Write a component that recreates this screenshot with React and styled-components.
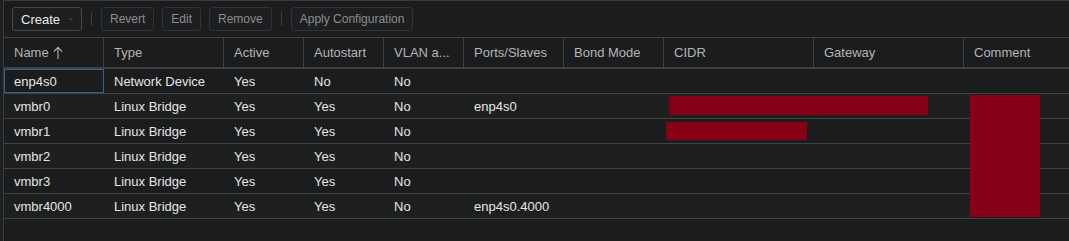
import React from 'react';
import styled, { createGlobalStyle } from 'styled-components';

const GlobalStyle = createGlobalStyle`
  html, body {
    margin: 0;
    padding: 0;
    background: #1b1c1e;
  }
  body {
    font-family: "Liberation Sans", Arial, sans-serif;
    font-size: 13px;
    color: #e4e4e4;
  }
`;

const columns = [
  { key: 'name', title: 'Name', width: 100 },
  { key: 'type', title: 'Type', width: 120 },
  { key: 'active', title: 'Active', width: 80 },
  { key: 'autostart', title: 'Autostart', width: 80 },
  { key: 'vlan', title: 'VLAN a...', width: 80 },
  { key: 'ports', title: 'Ports/Slaves', width: 100 },
  { key: 'bond', title: 'Bond Mode', width: 100 },
  { key: 'cidr', title: 'CIDR', width: 150 },
  { key: 'gateway', title: 'Gateway', width: 150 },
  { key: 'comment', title: 'Comment', width: null },
];

const rows = [
  { name: 'enp4s0', type: 'Network Device', active: 'Yes', autostart: 'No', vlan: 'No', ports: '' },
  { name: 'vmbr0', type: 'Linux Bridge', active: 'Yes', autostart: 'Yes', vlan: 'No', ports: 'enp4s0' },
  { name: 'vmbr1', type: 'Linux Bridge', active: 'Yes', autostart: 'Yes', vlan: 'No', ports: '' },
  { name: 'vmbr2', type: 'Linux Bridge', active: 'Yes', autostart: 'Yes', vlan: 'No', ports: '' },
  { name: 'vmbr3', type: 'Linux Bridge', active: 'Yes', autostart: 'Yes', vlan: 'No', ports: '' },
  { name: 'vmbr4000', type: 'Linux Bridge', active: 'Yes', autostart: 'Yes', vlan: 'No', ports: 'enp4s0.4000' },
];

const Page = styled.div`
  display: flex;
  height: 241px;
  background: #1b1c1e;
  overflow: hidden;
`;

const Gutter = styled.div`
  width: 3px;
  flex: none;
  background: #1f2022;
  border-right: 1px solid #3a3b3d;
`;

const Panel = styled.div`
  flex: 1;
  display: flex;
  flex-direction: column;
  border-top: 1px solid #3a3b3d;
  min-width: 0;
`;

const Toolbar = styled.div`
  height: 36px;
  display: flex;
  align-items: center;
  gap: 8px;
  padding: 0 8px;
  box-sizing: border-box;
`;

const Button = styled.button`
  height: 24px;
  box-sizing: border-box;
  display: flex;
  align-items: center;
  gap: 9px;
  padding: 0 8px;
  background: #1d1e20;
  border: 1px solid ${(p) => (p.$enabled ? '#45474a' : '#313235')};
  border-radius: 3px;
  color: ${(p) => (p.$enabled ? '#ececec' : '#8c8d8f')};
  font-family: "Liberation Sans", Arial, sans-serif;
  font-size: ${(p) => (p.$enabled ? '13px' : '12px')};
  cursor: default;
`;

const Separator = styled.div`
  width: 1px;
  height: 14px;
  background: #3d3e40;
  margin: 0 1px;
`;

const Grid = styled.div`
  display: flex;
  flex-direction: column;
`;

const HeaderRow = styled.div`
  display: flex;
  height: 32px;
  box-sizing: border-box;
  border-top: 1px solid #3f4042;
  border-bottom: 2px solid #3f4042;
`;

const HeaderCell = styled.div`
  flex: ${(p) => (p.$width ? `0 0 ${p.$width}px` : '1')};
  box-sizing: border-box;
  display: flex;
  align-items: center;
  gap: 4px;
  padding-left: 10px;
  color: #b4b5b6;
  white-space: nowrap;
  overflow: hidden;
  border-right: ${(p) => (p.$width ? '1px solid #3f4042' : 'none')};
`;

const Body = styled.div`
  position: relative;
  display: flex;
  flex-direction: column;
`;

const Row = styled.div`
  display: flex;
  height: 25px;
  box-sizing: border-box;
  border-bottom: 1px solid #414244;
  background: ${(p) => (p.$alt ? '#1e201f' : '#1b1c1e')};
`;

const Cell = styled.div`
  flex: ${(p) => (p.$width ? `0 0 ${p.$width}px` : '1')};
  box-sizing: border-box;
  display: flex;
  align-items: center;
  padding-left: ${(p) => (p.$focused ? '9px' : '10px')};
  color: #e6e6e6;
  white-space: nowrap;
  overflow: hidden;
  border: ${(p) => (p.$focused ? '1px solid #2f6592' : 'none')};
`;

const Redaction = styled.div`
  position: absolute;
  background: #880016;
  top: ${(p) => p.$top}px;
  left: ${(p) => p.$left}px;
  width: ${(p) => p.$width}px;
  height: ${(p) => p.$height}px;
`;

const Chevron = () => (
  <svg width="9" height="6" viewBox="0 0 9 6">
    <path d="M0.8 1 L4.5 4.6 L8.2 1" fill="none" stroke="#9a9b9d" strokeWidth="1.1" />
  </svg>
);

const SortUp = () => (
  <svg width="10" height="14" viewBox="0 0 10 14">
    <path d="M5 13 V1.5 M0.8 5.6 L5 1.4 L9.2 5.6" fill="none" stroke="#b4b5b6" strokeWidth="1.1" />
  </svg>
);

export default function App() {
  return (
    <>
      <GlobalStyle />
      <Page>
        <Gutter />
        <Panel>
          <Toolbar>
            <Button $enabled style={{ width: 70 }}>
              Create <Chevron />
            </Button>
            <Separator />
            <Button>Revert</Button>
            <Button>Edit</Button>
            <Button>Remove</Button>
            <Separator />
            <Button>Apply Configuration</Button>
          </Toolbar>
          <Grid>
            <HeaderRow>
              {columns.map((c) => (
                <HeaderCell key={c.key} $width={c.width}>
                  {c.title}
                  {c.key === 'name' && <SortUp />}
                </HeaderCell>
              ))}
            </HeaderRow>
            <Body>
              {rows.map((r, i) => (
                <Row key={r.name} $alt={i % 2 === 1}>
                  {columns.map((c) => (
                    <Cell key={c.key} $width={c.width} $focused={i === 0 && c.key === 'name'}>
                      {r[c.key] || ''}
                    </Cell>
                  ))}
                </Row>
              ))}
              <Redaction $top={27} $left={665} $width={259} $height={19} />
              <Redaction $top={53} $left={662} $width={141} $height={18} />
              <Redaction $top={26} $left={966} $width={70} $height={122} />
            </Body>
          </Grid>
        </Panel>
      </Page>
    </>
  );
}
